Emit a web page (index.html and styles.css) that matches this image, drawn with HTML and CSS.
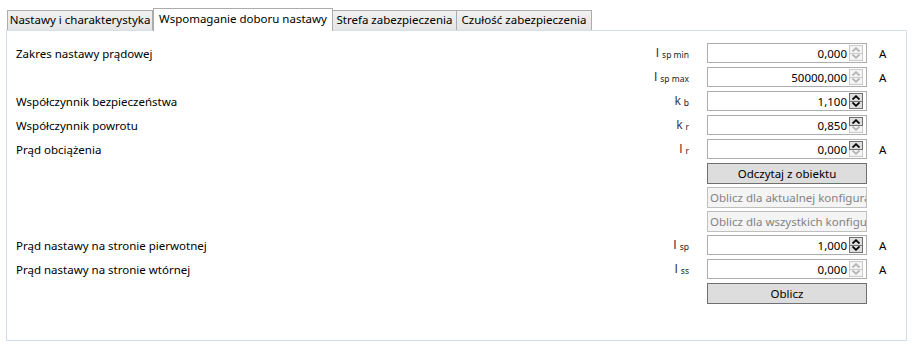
FILE: index.html
```html
<!DOCTYPE html>
<html lang="pl">
<head>
<meta charset="utf-8">
<title>Wspomaganie doboru nastawy</title>
<link rel="stylesheet" href="styles.css">
</head>
<body>
<div class="tabbar">
  <div class="tab tab-1">Nastawy i charakterystyka</div>
  <div class="tab tab-2 active">Wspomaganie doboru nastawy</div>
  <div class="tab tab-3">Strefa zabezpieczenia</div>
  <div class="tab tab-4">Czułość zabezpieczenia</div>
</div>
<div class="panel">
  <div class="form">
    <div class="label">Zakres nastawy prądowej</div>
    <div class="sym">I<span class="sub">sp min</span></div>
    <div class="num"><span class="val">0,000</span><span class="spin"><span class="half up off"></span><span class="half down off"></span></span></div>
    <div class="unit">A</div>

    <div class="label"></div>
    <div class="sym">I<span class="sub">sp max</span></div>
    <div class="num"><span class="val">50000,000</span><span class="spin"><span class="half up off"></span><span class="half down off"></span></span></div>
    <div class="unit">A</div>

    <div class="label">Współczynnik bezpieczeństwa</div>
    <div class="sym">k<span class="sub">b</span></div>
    <div class="num"><span class="val">1,100</span><span class="spin"><span class="half up"></span><span class="half down"></span></span></div>
    <div class="unit"></div>

    <div class="label">Współczynnik powrotu</div>
    <div class="sym">k<span class="sub">r</span></div>
    <div class="num"><span class="val">0,850</span><span class="spin"><span class="half up"></span><span class="half down off"></span></span></div>
    <div class="unit"></div>

    <div class="label">Prąd obciążenia</div>
    <div class="sym sym-red">I<span class="sub">r</span></div>
    <div class="num"><span class="val">0,000</span><span class="spin"><span class="half up"></span><span class="half down off"></span></span></div>
    <div class="unit">A</div>

    <div class="label"></div><div class="sym"></div>
    <div class="btn">Odczytaj z obiektu</div>
    <div class="unit"></div>

    <div class="label"></div><div class="sym"></div>
    <div class="btn disabled"><span>Oblicz dla aktualnej konfiguracji</span></div>
    <div class="unit"></div>

    <div class="label"></div><div class="sym"></div>
    <div class="btn disabled"><span>Oblicz dla wszystkich konfiguracji</span></div>
    <div class="unit"></div>

    <div class="label">Prąd nastawy na stronie pierwotnej</div>
    <div class="sym">I<span class="sub">sp</span></div>
    <div class="num"><span class="val">1,000</span><span class="spin"><span class="half up"></span><span class="half down"></span></span></div>
    <div class="unit">A</div>

    <div class="label">Prąd nastawy na stronie wtórnej</div>
    <div class="sym">I<span class="sub">ss</span></div>
    <div class="num"><span class="val">0,000</span><span class="spin"><span class="half up off"></span><span class="half down off"></span></span></div>
    <div class="unit">A</div>

    <div class="label"></div><div class="sym"></div>
    <div class="btn">Oblicz</div>
    <div class="unit"></div>
  </div>
</div>
</body>
</html>
```
FILE: styles.css
```css
* { box-sizing: border-box; }
html, body { margin: 0; padding: 0; background: #ffffff; }
body {
  font-family: "Noto Sans", "Open Sans", sans-serif;
  font-size: 11.5px;
  color: #000;
  width: 914px;
  height: 347px;
  overflow: hidden;
}
.tabbar {
  display: flex;
  align-items: flex-end;
  padding-top: 8px;
  padding-left: 7px;
}
.tab {
  height: 20px;
  border: 1px solid #acacac;
  border-bottom: none;
  background: linear-gradient(#f0f0f0, #e5e5e5);
  display: flex;
  align-items: center;
  justify-content: center;
  white-space: nowrap;
  color: #000;
  line-height: 1;
  padding-bottom: 1px;
}
.tab + .tab { border-left: none; }
.tab-1 { width: 146px; }
.tab-2 { width: 180px; }
.tab-3 { width: 124px; }
.tab-4 { width: 135px; }
.tab.active {
  height: 23px;
  margin-bottom: -1px;
  background: #ffffff;
  border-left: 1px solid #acacac;
  z-index: 1;
  padding-bottom: 3px;
}
.panel {
  margin-left: 6px;
  width: 901px;
  height: 311px;
  border: 1px solid #d6dde4;
  padding: 12px 0 0 9px;
}
.form {
  display: grid;
  grid-template-columns: 624px 67px 160px 40px;
  grid-auto-rows: 20px;
  row-gap: 4px;
}
.label {
  display: flex;
  align-items: center;
  white-space: nowrap;
}
.sym {
  display: flex;
  align-items: center;
  justify-content: flex-end;
  padding-right: 18px;
  white-space: nowrap;
  color: #3a2f45;
  font-family: "Liberation Sans", "Noto Sans", sans-serif;
  font-size: 12px;
}
.sym-red { color: #7a1f1f; }
.sub {
  font-family: "Noto Sans", sans-serif;
  font-size: 8.5px;
  margin-left: 3px;
  position: relative;
  top: 1px;
  color: #222;
}
.num {
  border: 1px solid #abadb3;
  background: #fff;
  display: flex;
  align-items: center;
  justify-content: flex-end;
  padding-right: 3px;
}
.val { margin-right: 2px; }
.spin {
  width: 14px;
  height: 16px;
  display: flex;
  flex-direction: column;
}
.half {
  flex: 1;
  border: 1px solid #707070;
  background-color: #dedede;
  background-repeat: no-repeat;
  background-position: center;
  background-size: 8px 5px;
}
.half.down { border-top: none; }
.half.up {
  background-image: url("data:image/svg+xml,%3Csvg xmlns='http://www.w3.org/2000/svg' width='8' height='5' viewBox='0 0 8 5'%3E%3Cpath d='M0.5 4.5 L4 1.2 L7.5 4.5' fill='none' stroke='%23000' stroke-width='1.8'/%3E%3C/svg%3E");
}
.half.down {
  background-image: url("data:image/svg+xml,%3Csvg xmlns='http://www.w3.org/2000/svg' width='8' height='5' viewBox='0 0 8 5'%3E%3Cpath d='M0.5 0.5 L4 3.8 L7.5 0.5' fill='none' stroke='%23000' stroke-width='1.8'/%3E%3C/svg%3E");
}
.half.off {
  border-color: #cacaca;
  background-color: #f4f4f4;
}
.half.up.off {
  background-image: url("data:image/svg+xml,%3Csvg xmlns='http://www.w3.org/2000/svg' width='8' height='5' viewBox='0 0 8 5'%3E%3Cpath d='M0.5 4.5 L4 1.2 L7.5 4.5' fill='none' stroke='%23b4b4b4' stroke-width='1.8'/%3E%3C/svg%3E");
}
.half.down.off {
  background-image: url("data:image/svg+xml,%3Csvg xmlns='http://www.w3.org/2000/svg' width='8' height='5' viewBox='0 0 8 5'%3E%3Cpath d='M0.5 0.5 L4 3.8 L7.5 0.5' fill='none' stroke='%23b4b4b4' stroke-width='1.8'/%3E%3C/svg%3E");
}
.up.off + .down:not(.off) { border-top: 1px solid #707070; }
.unit {
  display: flex;
  align-items: center;
  padding-left: 12px;
}
.btn {
  height: 21px;
  border: 1px solid #707070;
  background: #dddddd;
  display: flex;
  align-items: center;
  justify-content: center;
  white-space: nowrap;
  overflow: hidden;
  padding-bottom: 1px;
}
.btn.disabled {
  border-color: #bfbfbf;
  background: #f4f4f4;
  color: #838383;
  justify-content: flex-start;
  padding-left: 2px;
}
```
